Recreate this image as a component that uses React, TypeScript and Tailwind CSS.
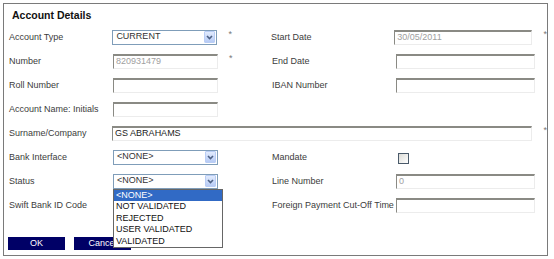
import React from 'react';

const font = { fontFamily: '"Liberation Sans", Arial, sans-serif' };

const Chevron = () => (
  <span className="flex h-[12px] w-[11px] items-center justify-center rounded-[1px] border border-[#b9cdf5] bg-gradient-to-b from-[#e2ebfd] to-[#b7cbf5]">
    <svg width="7" height="5" viewBox="0 0 7 5">
      <path d="M1 1 L3.5 3.5 L6 1" fill="none" stroke="#4d6185" strokeWidth="1.6" />
    </svg>
  </span>
);

const Select = ({ value, children }: { value: string; children?: React.ReactNode }) => (
  <div className="relative">
    <div className="flex h-[15px] w-[105px] items-center justify-between border border-[#7f9db9] bg-white pl-[3px] pr-[1px] text-[9px] text-[#333]">
      <span>{value}</span>
      <Chevron />
    </div>
    {children}
  </div>
);

const Input = ({ w = 'w-[105px]', value = '' }: { w?: string; value?: string }) => (
  <div
    className={`flex h-[15px] ${w} items-center border-t-2 border-l border-r border-b border-t-[#8a8a84] border-l-[#8a8a84] border-r-[#ececec] border-b-[#ececec] bg-white pl-[2px] text-[9px] text-[#a0a0a0]`}
  >
    {value}
  </div>
);

const Star = () => <span className="-mt-[6px] pl-[11px] text-[9px] leading-[10px] text-[#777]">*</span>;

const Label = ({ children, w }: { children: React.ReactNode; w: string }) => (
  <span className={`${w} pt-[1px] text-[9px] text-[#3c3c3c]`}>{children}</span>
);

const statuses = ['<NONE>', 'NOT VALIDATED', 'REJECTED', 'USER VALIDATED', 'VALIDATED'];

export default function App() {
  return (
    <div className="h-[259px] w-[554px] bg-white pl-[3px] pt-[3px]" style={font}>
      <div className="h-[253px] w-[545px] border border-[#7a7a7a]">
        <div className="h-[21px] pl-[8px] pt-[4px] text-[10.5px] font-bold leading-[14px] text-[#111]">
          Account Details
        </div>

        <div className="flex h-[24px] items-center pl-[5px]">
          <Label w="w-[104px]">Account Type</Label>
          <Select value="CURRENT" />
          <span className="flex w-[54px]"><Star /></span>
          <Label w="w-[124px]">Start Date</Label>
          <Input w="w-[139px]" value="30/05/2011" />
          <span className="flex"><Star /></span>
        </div>

        <div className="flex h-[24px] items-center pl-[5px]">
          <Label w="w-[104px]">Number</Label>
          <Input value="820931479" />
          <span className="flex w-[54px]"><Star /></span>
          <Label w="w-[124px]">End Date</Label>
          <Input w="w-[139px]" />
        </div>

        <div className="flex h-[24px] items-center pl-[5px]">
          <Label w="w-[104px]">Roll Number</Label>
          <Input />
          <span className="w-[54px]" />
          <Label w="w-[124px]">IBAN Number</Label>
          <Input w="w-[139px]" />
        </div>

        <div className="flex h-[24px] items-center pl-[5px]">
          <Label w="w-[104px]">Account Name: Initials</Label>
          <Input />
        </div>

        <div className="flex h-[24px] items-center pl-[5px]">
          <Label w="w-[104px]">Surname/Company</Label>
          <div className="flex h-[15px] w-[424px] items-center border-t-2 border-l border-r border-b border-t-[#8a8a84] border-l-[#8a8a84] border-r-[#ececec] border-b-[#ececec] bg-white pl-[2px] text-[9px] text-[#222]">
            GS ABRAHAMS
          </div>
          <span className="flex"><Star /></span>
        </div>

        <div className="flex h-[24px] items-center pl-[5px]">
          <Label w="w-[104px]">Bank Interface</Label>
          <Select value="<NONE>" />
          <span className="w-[54px]" />
          <Label w="w-[124px]">Mandate</Label>
          <span className="mt-[3px] ml-[2px] h-[11px] w-[11px] border border-[#4a5a6a] bg-gradient-to-br from-[#dcdcd7] to-white" />
        </div>

        <div className="relative z-10 flex h-[24px] items-center pl-[5px]">
          <Label w="w-[104px]">Status</Label>
          <Select value="<NONE>">
            <div className="absolute left-0 top-full w-[110px] border border-[#666] bg-white text-[9px] leading-[11.6px] text-[#111]">
              {statuses.map((s, i) => (
                <div key={s} className={i === 0 ? 'bg-[#316ac5] pl-[2px] text-white' : 'pl-[2px]'}>
                  {s}
                </div>
              ))}
            </div>
          </Select>
          <span className="w-[54px]" />
          <Label w="w-[124px]">Line Number</Label>
          <Input w="w-[139px]" value="0" />
        </div>

        <div className="flex h-[24px] items-center pl-[5px]">
          <Label w="w-[104px]">Swift Bank ID Code</Label>
          <span className="w-[159px]" />
          <Label w="w-[124px]">Foreign Payment Cut-Off Time</Label>
          <Input w="w-[139px]" />
        </div>

        <div className="mt-[20px] flex gap-[9px] pl-[4px]">
          <button className="h-[13px] w-[57px] bg-[#000066] text-[9px] leading-[13px] text-white">OK</button>
          <button className="h-[13px] w-[57px] bg-[#000066] text-[9px] leading-[13px] text-white">Cancel</button>
        </div>
      </div>
    </div>
  );
}
